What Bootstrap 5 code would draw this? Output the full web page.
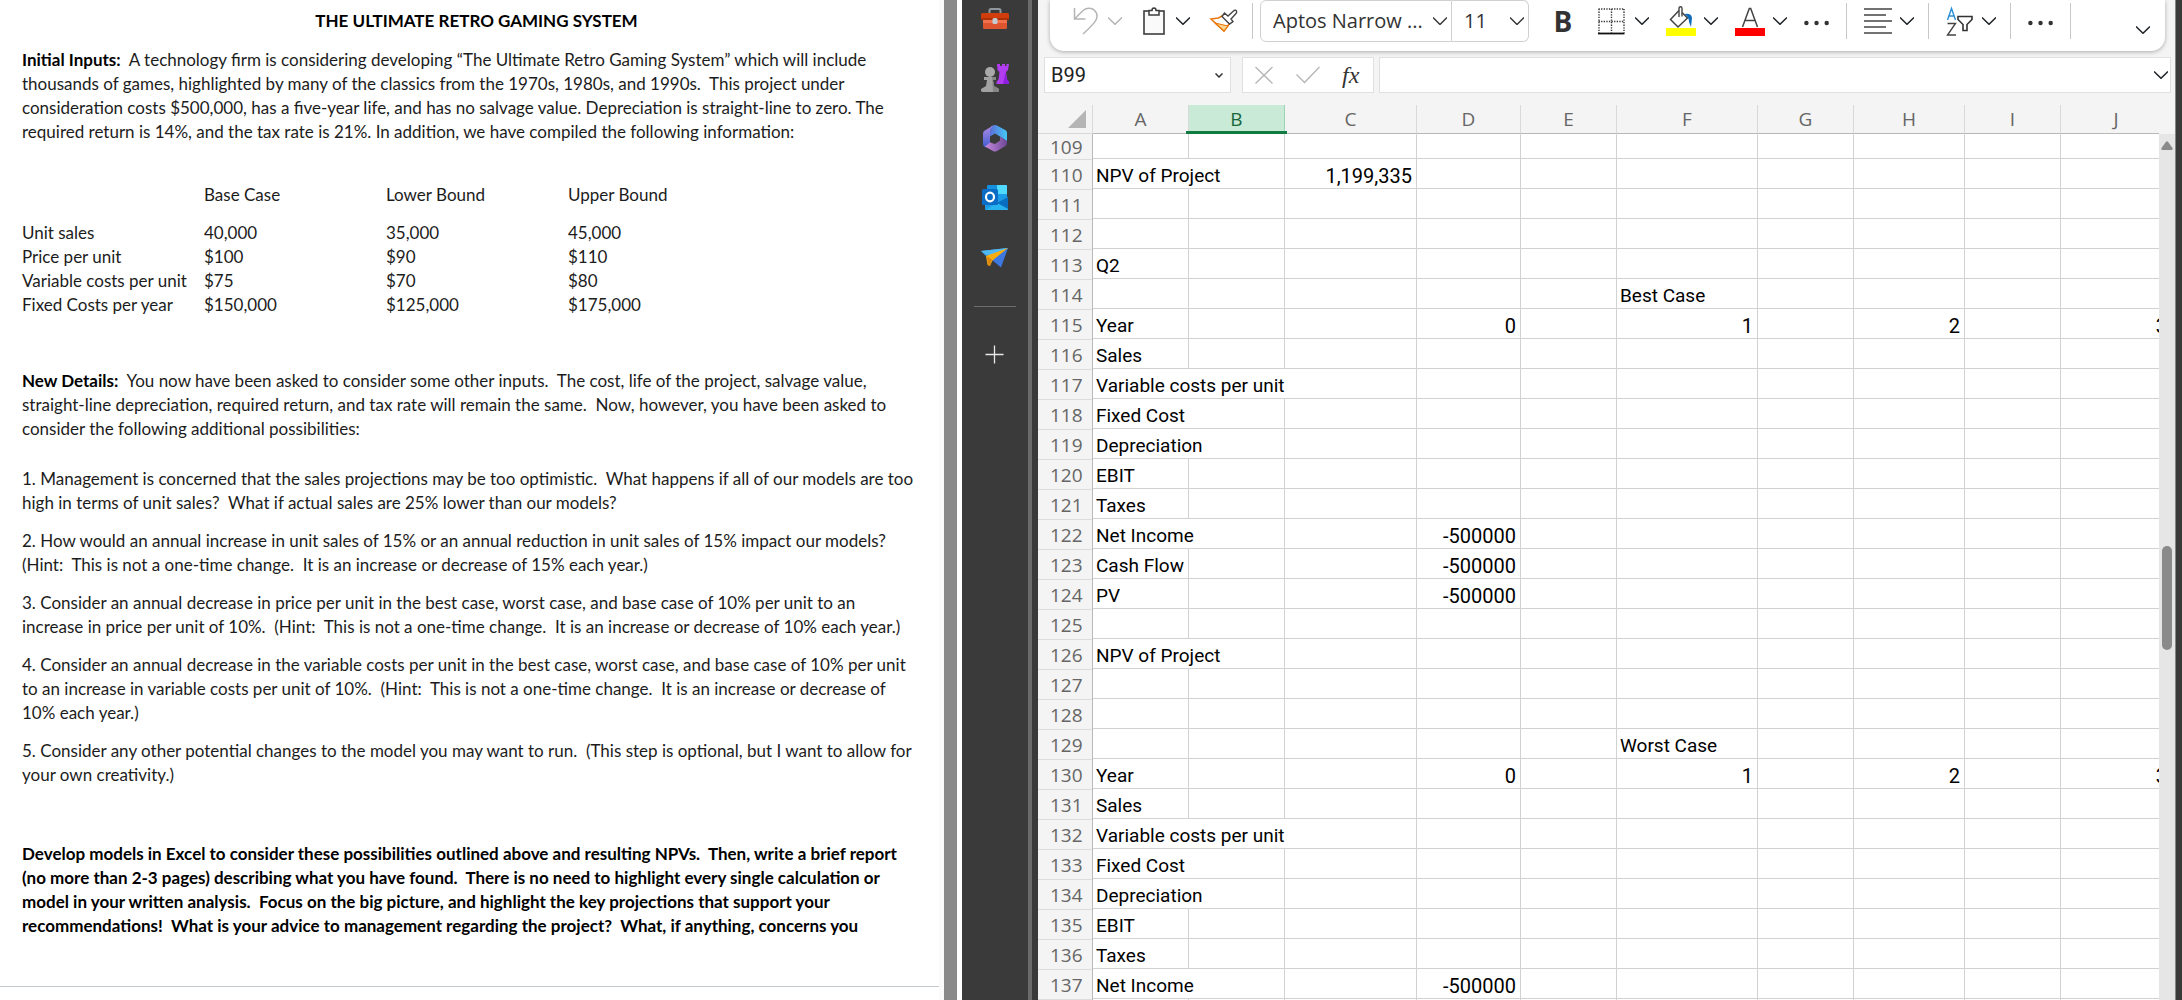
<!DOCTYPE html>
<html lang="en">
<head>
<meta charset="utf-8">
<meta name="viewport" content="width=device-width, initial-scale=1">
<title>Retro Gaming System – NPV workbook</title>
<link href="https://cdn.jsdelivr.net/npm/bootstrap@5.3.0/dist/css/bootstrap.min.css" rel="stylesheet">
<style>
  body { font-family: "Open Sans", "Noto Sans", sans-serif; background: #fff; }
  svg { display: block; flex: none; }

  /* document pane */
  .doc-pane { flex: 962 1 0; min-width: 0; }
  .doc-page { font: 17px/24px Lato, "Open Sans", sans-serif; color: #1c1c1c; padding: 9px 0 0 22px; white-space: nowrap; overflow: hidden; }
  .doc-page p { margin: 0 0 14px; }
  .doc-page b, .doc-page h1, .closing { color: #000; font-weight: 700; }
  .doc-page h1 { font-size: 17px; line-height: 24px; margin: 0 0 15px; padding-right: 8px; }
  .doc-page .intro { margin-bottom: 39px; }
  .doc-page .details { margin: 52px 0 26px; }
  .doc-page .closing { margin: 55px 0 48px; }
  .inputs-table { table-layout: fixed; width: 728px; }
  .inputs-table th, .inputs-table td { padding: 0; font-weight: 400; }
  .inputs-table thead th { padding-bottom: 14px; }
  .page-end { border-top: 1px solid #c3c8cc; margin: 0 0 0 -22px; }
  .page-edge { width: 5px; background: #fbfbfb; }
  .doc-scroll { width: 13px; background: #8a8a8a; margin-right: 5px; }

  /* browser side bar */
  .side-rail { width: 66px; background: #3a3a3a; padding-top: 4px; gap: 32px; }
  .side-rail a { display: block; }
  .rail-rule { width: 42px; height: 1px; background: #6e6e6e; margin-top: 2px; }
  .rail-grip { width: 10px; border-left: 4px solid #6b6b6b; background: #3a3a3a; }

  /* workbook */
  .book { flex: 1144 1 0; min-width: 0; background: #f4f4f4; }
  .book-edge { width: 7px; border-left: 1px solid #858585; background: #3a3a3a; }
  .ribbon { margin: 0 10px 0 12px; padding: 0 15px 9px 22px; background: #fff; border-radius: 0 0 14px 14px; box-shadow: 0 1px 4px rgba(0,0,0,.3); }
  .ribbon .btn, .fx-box .btn, .name-box .btn, .formula .btn { padding: 0; border: 0; border-radius: 0; }
  .tool { gap: 8px; margin-right: 17px; }
  .tool-last { margin-right: 14px; }
  .tool-rule { width: 1px; height: 36px; background: #c8c8c8; margin-right: 17px; }
  .tool-rule-font { margin-right: 7px; }
  .font-group { margin-right: 17px; }
  .ribbon .form-select { height: 42px; border: 1px solid #d0d0d0; border-radius: 6px; color: #333; font-size: 20px; line-height: 30px; padding: 0 0 0 12px;
    background-image: url("data:image/svg+xml,%3Csvg xmlns='http://www.w3.org/2000/svg' viewBox='0 0 14 8'%3E%3Cpath d='M0 .5 7 7.5 14 .5' fill='none' stroke='%23333' stroke-width='1.4'/%3E%3C/svg%3E");
    background-size: 14px 8px; background-position: right 4px center; }
  .ribbon .font-name { width: 192px; border-radius: 6px 0 0 6px; }
  .ribbon .font-size { width: 77px; border-left: 0; border-radius: 0 6px 6px 0; }
  .ribbon .bold-btn { width: 34px; margin-right: 17px; font-size: 28px; line-height: 40px; font-weight: 700; color: #333; }
  .ribbon-more { margin-top: 18px; }

  .formula-row { padding: 6px 4px 0 6px; }
  .name-box, .fx-box, .formula { height: 36px; background: #fff; border: 1px solid #e0e0e0; }
  .name-box { width: 187px; margin-right: 11px; padding-right: 7px; }
  .fx-box { width: 132px; margin-right: 5px; gap: 22px; padding: 0 11px; }
  .formula { padding-right: 2px; min-width: 0; }
  .name-box input, .formula input { border: 0; background: none; padding: 0 0 0 6px; min-width: 0; outline: 0; }
  .name-box input { font: 20px/30px Roboto, sans-serif; color: #222; }
  .fx-box .fx-sign { font: italic 24px/30px "Liberation Serif", serif; color: #333; }

  .sheet { margin-top: 12px; min-height: 0; }
  .grid-clip { overflow: hidden; min-width: 0; }
  .cells { table-layout: fixed; width: 1134px; border-collapse: separate; border-spacing: 0; font: 19px/24px Roboto, sans-serif; color: #000; }
  .cells th { font: 19px/28px "Open Sans", sans-serif; color: #666; text-align: center; padding: 0; }
  .cells thead th { height: 29px; border-right: 1px solid #d9d9d9; border-bottom: 1px solid #b8b8b8; }
  .cells thead th:first-child { border-bottom-color: #d9d9d9; }
  .cells thead .picked { position: relative; background: #caead8; color: #18673a; border-right-color: #9bd3b4; }
  .cells thead .picked::after { content: ""; position: absolute; left: -3px; right: -3px; bottom: -1px; height: 3px; background: #107c41; }
  .cells tbody th { background: #f4f4f4; border-right: 1px solid #b8b8b8; box-shadow: inset 0 1px 0 #dcdcdc; text-align: left; padding: 2px 0 0 12px; }
  .cells tbody td { height: 30px; background: #fff; border-right: 1px solid #d2d2d2; border-bottom: 1px solid #d2d2d2; padding: 5px 4px 0 3px; line-height: 24px; white-space: nowrap; }
  .cells .first-row th, .cells .first-row td { height: 25px; line-height: 24px; padding-top: 0; box-shadow: none; }
  .cells .num { font-size: 20px; text-align: right; }
  .corner svg { margin-left: auto; margin-right: 6px; }
  .sheet-scroll { width: 16px; margin-top: 29px; background: #e6e6e6; padding-top: 7px; }
  .sheet-thumb { width: 10px; height: 104px; border-radius: 5px; background: #8a8a8a; margin-top: 396px; }
</style>
</head>
<body class="vh-100 overflow-hidden">
<svg width="0" height="0" class="position-absolute" aria-hidden="true">
  <symbol id="chev" viewBox="0 0 14 8"><path d="M0 .5 7 7.3 14 .5" fill="none" stroke="currentColor" stroke-width="1.5"/></symbol>
  <symbol id="dots" viewBox="0 0 29 6"><circle cx="2.5" cy="3" r="2.3"/><circle cx="13" cy="3" r="2.3"/><circle cx="23.5" cy="3" r="2.3"/></symbol>
</svg>
<div class="d-flex vh-100 overflow-hidden">

  <main class="doc-pane d-flex">
    <article class="doc-page flex-grow-1">
      <h1 class="text-center">THE ULTIMATE RETRO GAMING SYSTEM</h1>
      <p class="intro"><b>Initial Inputs:</b>&nbsp; A technology firm is considering developing “The Ultimate Retro Gaming System” which will include<br>thousands of games, highlighted by many of the classics from the 1970s, 1980s, and 1990s.&nbsp; This project under<br>consideration costs $500,000, has a five-year life, and has no salvage value. Depreciation is straight-line to zero. The<br>required return is 14%, and the tax rate is 21%. In addition, we have compiled the following information:</p>
      <table class="inputs-table">
        <thead><tr><th></th><th scope="col">Base Case</th><th scope="col">Lower Bound</th><th scope="col">Upper Bound</th></tr></thead>
        <tbody>
          <tr><th scope="row">Unit sales</th><td>40,000</td><td>35,000</td><td>45,000</td></tr>
          <tr><th scope="row">Price per unit</th><td>$100</td><td>$90</td><td>$110</td></tr>
          <tr><th scope="row">Variable costs per unit</th><td>$75</td><td>$70</td><td>$80</td></tr>
          <tr><th scope="row">Fixed Costs per year</th><td>$150,000</td><td>$125,000</td><td>$175,000</td></tr>
        </tbody>
      </table>
      <p class="details"><b>New Details:</b>&nbsp; You now have been asked to consider some other inputs.&nbsp; The cost, life of the project, salvage value,<br>straight-line depreciation, required return, and tax rate will remain the same.&nbsp; Now, however, you have been asked to<br>consider the following additional possibilities:</p>
      <p>1. Management is concerned that the sales projections may be too optimistic.&nbsp; What happens if all of our models are too<br>high in terms of unit sales?&nbsp; What if actual sales are 25% lower than our models?</p>
      <p>2. How would an annual increase in unit sales of 15% or an annual reduction in unit sales of 15% impact our models?<br>(Hint:&nbsp; This is not a one-time change.&nbsp; It is an increase or decrease of 15% each year.)</p>
      <p>3. Consider an annual decrease in price per unit in the best case, worst case, and base case of 10% per unit to an<br>increase in price per unit of 10%.&nbsp; (Hint:&nbsp; This is not a one-time change.&nbsp; It is an increase or decrease of 10% each year.)</p>
      <p>4. Consider an annual decrease in the variable costs per unit in the best case, worst case, and base case of 10% per unit<br>to an increase in variable costs per unit of 10%.&nbsp; (Hint:&nbsp; This is not a one-time change.&nbsp; It is an increase or decrease of<br>10% each year.)</p>
      <p>5. Consider any other potential changes to the model you may want to run.&nbsp; (This step is optional, but I want to allow for<br>your own creativity.)</p>
      <p class="closing">Develop models in Excel to consider these possibilities outlined above and resulting NPVs.&nbsp; Then, write a brief report<br>(no more than 2-3 pages) describing what you have found.&nbsp; There is no need to highlight every single calculation or<br>model in your written analysis.&nbsp; Focus on the big picture, and highlight the key projections that support your<br>recommendations!&nbsp; What is your advice to management regarding the project?&nbsp; What, if anything, concerns you</p>
      <div class="page-end"></div>
    </article>
    <div class="page-edge flex-shrink-0"></div>
    <div class="doc-scroll flex-shrink-0"></div>
  </main>

  <nav class="side-rail d-flex flex-column align-items-center flex-shrink-0" aria-label="Side bar">
    <a href="#" aria-label="Tools"><svg width="28" height="28" viewBox="0 0 28 28">
      <path d="M8.500 9V6.500Q8.500 5 10 5h8q1.500 0 1.500 1.500V9" fill="none" stroke="#8f979d" stroke-width="2"/>
      <path d="M2 13h24v9.500Q26 25 24 25H4q-2 0-2-2.500z" fill="#f0714c"/><path d="M2 19h24v4q0 2-2 2H4q-2 0-2-2z" fill="#dd552f"/>
      <rect x="0" y="9" width="28" height="7" rx="1.500" fill="#d13d0c"/><rect x="0" y="14" width="28" height="2" fill="#ab3109"/>
      <rect x="11.500" y="14" width="5" height="6" rx="1.500" fill="#c3cbd0"/></svg></a>
    <a href="#" aria-label="Games"><svg width="28" height="28" viewBox="0 0 28 28">
      <path d="M16 0h3v2h2V0h3v2h1.500V0H28l-1 6-2 2 .8 7 2.200 3v2H15.500v-2l2.200-3 .8-7-2-2z" fill="#b23cf0"/><path d="M24.500 8 25.800 15l2.200 3v2h-6z" fill="#8f1fe0"/>
      <circle cx="9" cy="8" r="5" fill="#a9a9a9"/><path d="M3 13h12v3h-3l1 6 5 3v1.500Q18 28 16 28H2q-2 0-2-1.500V25l5-3 1-6H3z" fill="#a2a2a2"/><path d="M11 13h4v3h-3l1 6 5 3v1.500Q18 28 16 28h-4z" fill="#868686"/></svg></a>
    <a href="#" aria-label="Microsoft 365"><svg width="28" height="28" viewBox="0 0 28 28">
      <defs><linearGradient id="m1" x1="0" x2="1" y1="0" y2="0"><stop stop-color="#5a6fd8"/><stop offset="1" stop-color="#45c8f5"/></linearGradient>
      <linearGradient id="m2" x1="0" x2="0" y1="0" y2="1"><stop stop-color="#b48be6"/><stop offset="1" stop-color="#3f5fd0"/></linearGradient>
      <linearGradient id="m3" x1="0" x2="1" y1="0" y2="0"><stop stop-color="#c68be0"/><stop offset="1" stop-color="#6e4794"/></linearGradient></defs>
      <path d="M10 2.500 12 1.500Q14 .5 16 1.500L25 6.500Q26 7.500 26 9V17L19 12.500 14 9.500 9 12.500V8z" fill="url(#m1)"/>
      <path d="M3 7 13 1Q9 4 9 8V18L11 19.500 5 23.500 3 22.500Q2 21 2 19V10q0-2 1-3z" fill="url(#m2)"/>
      <path d="M9 18.500 14 20 19 16.500V12.500L26 17v2q0 2-1.500 3l-8.500 5q-2 1-4 0L4 22.500z" fill="url(#m3)"/></svg></a>
    <a href="#" aria-label="Outlook"><svg width="28" height="28" viewBox="0 0 28 28">
      <rect x="6" y="1" width="20" height="17" rx="1" fill="#1490df"/><path d="M16 1h9q1 0 1 1v8H16z" fill="#50d9ff"/><path d="M6 10h10v8H6z" fill="#0f5ea8"/><path d="M16 10h10v6H16z" fill="#1b9be8"/>
      <path d="M4 16 27 13v12q0 1-1 1H5q-1 0-1-1z" fill="#1d9ae6"/><path d="M27 13v12L16 19z" fill="#0a6ec0"/><path d="M4 26 16 19l11 6q0 1-1 1z" fill="#28b3ee"/>
      <rect x="1" y="5" width="16" height="16" rx="1.500" fill="#0a6cc4"/><ellipse cx="9" cy="13" rx="4" ry="4.300" fill="none" stroke="#fff" stroke-width="2.200"/></svg></a>
    <a href="#" aria-label="Drop"><svg width="28" height="28" viewBox="0 0 28 28">
      <path d="M0 7 27 4 5 12z" fill="#3da7ee"/><path d="M27 4 20 23.500 11 16z" fill="#3c78e0"/><path d="M0 7 27 4 12 15z" fill="#50b9f3"/><path d="M5 12 27 4 11.500 16.500 9 22 6.500 21z" fill="#f6ad10"/><path d="M9 22 11 15.500 6 12.500 7 21z" fill="#dc8710"/></svg></a>
    <div class="rail-rule"></div>
    <a href="#" aria-label="Add"><svg width="28" height="28" viewBox="0 0 28 28"><path d="M4.500 15.500h18M13.500 6.500v18" stroke="#e8e8e8" stroke-width="1.300" fill="none"/></svg></a>
  </nav>
  <div class="rail-grip flex-shrink-0"></div>

  <section class="book d-flex">
    <div class="d-flex flex-column flex-grow-1 overflow-hidden">
      <div class="ribbon d-flex align-items-center" role="toolbar" aria-label="Ribbon">
        <div class="tool d-flex align-items-center">
          <button class="btn" aria-label="Undo"><svg width="28" height="30" viewBox="0 0 28 30"><path d="M2.500 2v11h11M2.500 13 11 4.500Q16 .5 21.500 3.500 27 8 24 14 22 18 11 28" fill="none" stroke="#b5b5b5" stroke-width="1.500"/></svg></button>
          <button class="btn" aria-label="Undo history"><svg width="14" height="8" color="#b5b5b5"><use href="#chev"/></svg></button>
        </div>
        <div class="tool d-flex align-items-center">
          <button class="btn" aria-label="Paste"><svg width="29" height="30" viewBox="0 0 29 30"><rect x="5" y="5" width="20" height="23" fill="#fafafa" stroke="#3c3c3c" stroke-width="1.600"/><path d="M10 9V4.500h3Q13 2 15 2t2 2.500h3V9z" fill="#fff" stroke="#3c3c3c" stroke-width="1.500"/></svg></button>
          <button class="btn" aria-label="Paste options"><svg width="14" height="8"><use href="#chev"/></svg></button>
        </div>
        <div class="tool tool-last d-flex align-items-center">
          <button class="btn" aria-label="Format painter"><svg width="31" height="30" viewBox="0 0 31 30"><path d="M4 13 11.500 12 17.500 8.500 25 16 22 18 17 25z" fill="#fff" stroke="#e8760c" stroke-width="1.500"/><path d="M8 17 21 20 17 25z" fill="#fbd58a" stroke="#e8760c" stroke-width="1.200"/><path d="M15 10.500 17.500 7 21 10 27 4.500Q29 3.500 29.500 5T29 7.500L24 13 26 15.500 22.500 18z" fill="#fff" stroke="#444" stroke-width="1.400"/></svg></button>
        </div>
        <div class="tool-rule tool-rule-font"></div>
        <div class="font-group d-flex">
          <select class="form-select font-name" aria-label="Font"><option>Aptos Narrow ...</option></select>
          <select class="form-select font-size" aria-label="Font size"><option>11</option></select>
        </div>
        <button class="btn bold-btn" aria-label="Bold">B</button>
        <div class="tool d-flex align-items-center">
          <button class="btn" aria-label="Borders"><svg width="30" height="30" viewBox="0 0 30 30"><path d="M1.500 3h26M1.500 15.500h26M2 3v24M14.500 3v24M27 3v24" fill="none" stroke="#333" stroke-width="1.400" stroke-dasharray="1.300 1.300"/><path d="M1 27.500h26.500" stroke="#111" stroke-width="1.800"/></svg></button>
          <button class="btn" aria-label="Border options"><svg width="14" height="8"><use href="#chev"/></svg></button>
        </div>
        <div class="tool d-flex align-items-center">
          <button class="btn" aria-label="Fill colour"><svg width="30" height="30" viewBox="0 0 30 30"><path d="M13 4.500 4.500 13.500 12 21 21.500 12 16 6.500" fill="none" stroke="#444" stroke-width="1.500"/><path d="M13 11V2.500Q13 .8 14.500.8T16 2.500v8" fill="none" stroke="#444" stroke-width="1.400"/><path d="M18.500 8q7-1 7.500 4l-1 9-2-5q0-5-4.500-8z" fill="#0f6cbd"/><rect y="22" width="30" height="8" fill="#ff0"/></svg></button>
          <button class="btn" aria-label="Fill options"><svg width="14" height="8"><use href="#chev"/></svg></button>
        </div>
        <div class="tool d-flex align-items-center">
          <button class="btn" aria-label="Font colour"><svg width="30" height="30" viewBox="0 0 30 30"><path d="M7.500 21 14.300 2.500h1.400L22.500 21M10 14.500h10" fill="none" stroke="#444" stroke-width="1.500"/><rect y="22" width="30" height="8" fill="#f00"/></svg></button>
          <button class="btn" aria-label="Font colour options"><svg width="14" height="8"><use href="#chev"/></svg></button>
        </div>
        <div class="tool tool-last"><button class="btn" aria-label="More font options"><svg width="28" height="6" fill="#333"><use href="#dots"/></svg></button></div>
        <div class="tool-rule"></div>
        <div class="tool tool-last d-flex align-items-center">
          <button class="btn" aria-label="Alignment"><svg width="28" height="30" viewBox="0 0 28 30"><path d="M0 3h28M0 9h22M0 15h28M0 21h22M0 27h28" stroke="#444" stroke-width="1.500"/></svg></button>
          <button class="btn" aria-label="Alignment options"><svg width="14" height="8"><use href="#chev"/></svg></button>
        </div>
        <div class="tool-rule"></div>
        <div class="tool tool-last d-flex align-items-center">
          <button class="btn" aria-label="Sort and filter"><svg width="28" height="30" viewBox="0 0 28 30"><path d="M1.500 14 5.500 2.500 9.500 14M3 10h5" fill="none" stroke="#2b8fd6" stroke-width="1.400"/><path d="M1.500 17.500h8L1.500 29h8.500" fill="none" stroke="#444" stroke-width="1.400"/><path d="M12 10.500h14v3l-5 5v6h-4v-6l-5-5z" fill="#fff" stroke="#333" stroke-width="1.600"/></svg></button>
          <button class="btn" aria-label="Sort options"><svg width="14" height="8"><use href="#chev"/></svg></button>
        </div>
        <div class="tool-rule"></div>
        <div class="tool tool-last"><button class="btn" aria-label="More commands"><svg width="28" height="6" fill="#333"><use href="#dots"/></svg></button></div>
        <div class="tool-rule"></div>
        <button class="btn ribbon-more ms-auto" aria-label="Ribbon display options"><svg width="14" height="8"><use href="#chev"/></svg></button>
      </div>

      <div class="formula-row d-flex">
        <div class="name-box d-flex align-items-center flex-shrink-0">
          <input class="flex-grow-1" type="text" value="B99" aria-label="Name box">
          <button class="btn" aria-label="Named ranges"><svg width="8" height="5" viewBox="0 0 8 5"><path d="M.5.5 4 4 7.500.5" fill="none" stroke="#333" stroke-width="1.500"/></svg></button>
        </div>
        <div class="fx-box d-flex align-items-center flex-shrink-0">
          <button class="btn" aria-label="Cancel"><svg width="20" height="20" viewBox="0 0 20 20"><path d="M1.500 2 18.500 18.500M18.500 2 1.500 18.500" stroke="#b5b5b5" stroke-width="1.300"/></svg></button>
          <button class="btn" aria-label="Enter"><svg width="24" height="20" viewBox="0 0 24 20"><path d="M.5 9.500 8.500 17.500 23.500 2" fill="none" stroke="#b5b5b5" stroke-width="1.300"/></svg></button>
          <button class="btn fx-sign" aria-label="Insert function">fx</button>
        </div>
        <div class="formula d-flex align-items-center flex-grow-1">
          <input class="flex-grow-1" type="text" aria-label="Formula bar">
          <button class="btn" aria-label="Expand formula bar"><svg width="14" height="8"><use href="#chev"/></svg></button>
        </div>
      </div>

      <div class="sheet d-flex flex-grow-1">
        <div class="grid-clip flex-grow-1">
          <table class="cells">
            <colgroup><col style="width:55px"><col style="width:96px"><col style="width:96px"><col style="width:132px"><col style="width:104px"><col style="width:96px"><col style="width:141px"><col style="width:96px"><col style="width:111px"><col style="width:96px"><col style="width:111px"></colgroup>
            <thead><tr><th class="corner"><svg width="18" height="18" viewBox="0 0 18 18"><path d="M18 0v18H0z" fill="#b5b5b5"/></svg></th><th>A</th><th class="picked">B</th><th>C</th><th>D</th><th>E</th><th>F</th><th>G</th><th>H</th><th>I</th><th>J</th></tr></thead>
            <tbody id="rows"></tbody>
          </table>
        </div>
        <div class="sheet-scroll d-flex flex-column align-items-center flex-shrink-0">
          <svg width="12" height="9" viewBox="0 0 12 9"><path d="M5 .8Q6-.4 7 .8L11.500 7Q12 9 10.500 9h-9Q0 9 .5 7z" fill="#8a8a8a"/></svg>
          <div class="sheet-thumb"></div>
        </div>
      </div>
    </div>
    <div class="book-edge flex-shrink-0"></div>
  </section>
</div>

<script src="https://cdn.jsdelivr.net/npm/bootstrap@5.3.0/dist/js/bootstrap.bundle.min.js"></script>
<script>
  // Sheet contents by row; span = columns the label in A runs across.
  const years = { D: '0', F: '1', H: '2', J: '3' };
  const data = {
    110: { A: 'NPV of Project', span: 2, C: '1,199,335' },
    113: { A: 'Q2' },
    114: { F: 'Best Case' },
    115: { A: 'Year', ...years },
    116: { A: 'Sales' },
    117: { A: 'Variable costs per unit', span: 3 },
    118: { A: 'Fixed Cost', span: 2 },
    119: { A: 'Depreciation', span: 2 },
    120: { A: 'EBIT' },
    121: { A: 'Taxes' },
    122: { A: 'Net Income', span: 2, D: '-500000' },
    123: { A: 'Cash Flow', D: '-500000' },
    124: { A: 'PV', D: '-500000' },
    126: { A: 'NPV of Project', span: 2 },
    129: { F: 'Worst Case' },
    130: { A: 'Year', ...years },
    131: { A: 'Sales' },
    132: { A: 'Variable costs per unit', span: 3 },
    133: { A: 'Fixed Cost', span: 2 },
    134: { A: 'Depreciation', span: 2 },
    135: { A: 'EBIT' },
    136: { A: 'Taxes' },
    137: { A: 'Net Income', span: 2, D: '-500000' }
  };
  let html = '';
  for (let r = 109; r <= 137; r++) {
    const row = data[r] || {};
    const span = row.span || 1;
    html += `<tr${r === 109 ? ' class="first-row"' : ''}><th scope="row">${r}</th>`;
    [...'ABCDEFGHIJ'].forEach((c, i) => {
      if (i > 0 && i < span) return;
      const v = row[c] || '';
      html += `<td${i === 0 && span > 1 ? ` colspan="${span}"` : ''}${/^-?[\d,]+$/.test(v) ? ' class="num"' : ''}>${v}</td>`;
    });
    html += '</tr>';
  }
  document.getElementById('rows').innerHTML = html + '<tr><th></th>' + '<td></td>'.repeat(10) + '</tr>';
</script>
</body>
</html>
